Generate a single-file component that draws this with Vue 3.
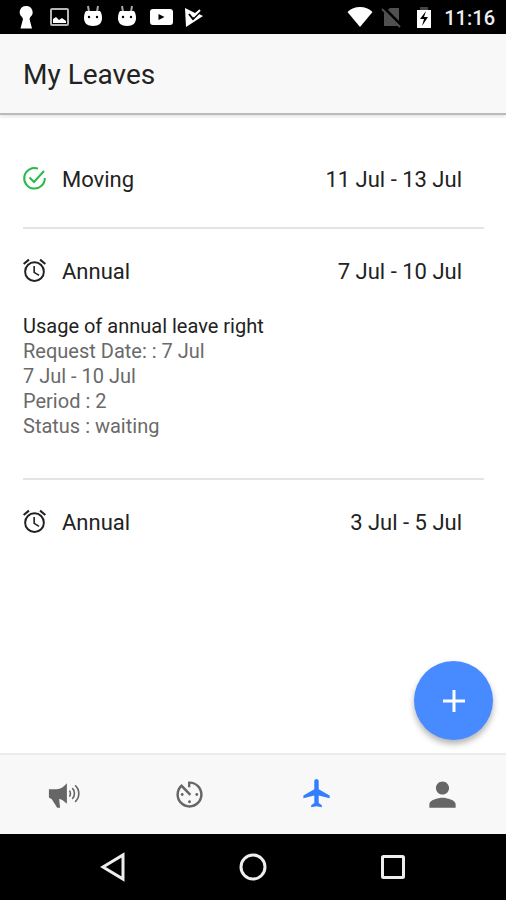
<template>
  <div class="screen">
    <div class="status-bar">
      <div class="status-group">
        <svg viewBox="0 0 24 24" fill="#fff">
          <path d="M12 1a6.2 6.2 0 0 0-4 11l1 2-2.500 9.500h11.500L15.500 14l.8-2A6.2 6.2 0 0 0 12 1z" />
        </svg>
        <svg viewBox="0 0 24 24">
          <rect x="3" y="4" width="17" height="16" rx="1" fill="none" stroke="#b5b5b5" stroke-width="2" />
          <path d="M5 18v-4l3-2 3 3 3-2 4 3v2z" fill="#fff" />
        </svg>
        <svg v-for="n in 2" :key="n" viewBox="0 0 24 24">
          <path d="M6 1l1 6M16 1l-1 6" stroke="#aaa" stroke-width="2" />
          <path d="M4 6h14c1.500 2 2 4 2 7 0 5-3 8-9 8s-9-3-9-8c0-3 .5-5 2-7z" fill="#fff" />
          <circle cx="7" cy="12" r="1.2" />
          <circle cx="15" cy="12" r="1.2" />
        </svg>
        <svg viewBox="0 0 24 24">
          <rect x="0" y="4" width="23" height="16" rx="3" fill="#fff" />
          <path d="M8.500 9l6 3-6 3z" />
        </svg>
        <svg viewBox="0 0 24 24">
          <path d="M1 3l10 5 5-3-1 4 4 2L2 22z" fill="#fff" />
          <path d="M5 9l4 5 9-9" fill="none" stroke="#000" stroke-width="2" />
          <path d="M7 8l3 3 6-6" fill="none" stroke="#fff" stroke-width="2" />
        </svg>
      </div>
      <div class="status-group right">
        <svg viewBox="0 0 24 24" fill="#fff">
          <path d="M12 22L-.5 7C3 3.500 7 2 12 2s9 1.500 12.500 5z" />
        </svg>
        <svg viewBox="0 0 24 24">
          <path d="M10 3h9v18H4V8z" fill="#505050" />
          <path d="M3 2l19 19" stroke="#000" stroke-width="3" />
          <path d="M2 4l18 18" stroke="#505050" stroke-width="2" />
        </svg>
        <svg viewBox="0 0 24 24">
          <path d="M8 2h8v3H8z" fill="#444" />
          <path d="M5 5h14v18H5z" fill="#fff" />
          <path d="M14 6l-6 8h4l-2 7 6-9h-4z" />
        </svg>
        <span class="clock">11:16</span>
      </div>
    </div>

    <header class="page-header">
      <h1>My Leaves</h1>
    </header>

    <main class="content">
      <ul class="leave-list">
        <li v-for="leave in leaves" :key="leave.id" class="leave-item">
          <div class="leave-head" @click="toggle(leave)">
            <svg v-if="leave.approved" class="leave-icon" viewBox="0 0 23 23" fill="none" stroke="#28ba4b" stroke-width="2">
              <path d="M15 1.600A10.300 10.300 0 1 0 21.800 11" />
              <path d="M6.500 10.500l4.500 4.500L21 4" />
            </svg>
            <svg v-else class="leave-icon" viewBox="2 2 20 20" fill="#222">
              <path
                d="M22 5.720l-4.600-3.860-1.150 1.370 4.600 3.860zM7.750 3.230L6.600 1.860 2 5.710l1.150 1.370zM12.400 8h-1.400v6l4.600 2.750.7-1.150-3.900-2.350zM12 4a9 9 0 1 0 0 18 9 9 0 0 0 0-18zm0 16.300a7.300 7.300 0 1 1 0-14.600 7.300 7.300 0 0 1 0 14.600z"
              />
            </svg>
            <span class="leave-type">{{ leave.type }}</span>
            <span class="leave-range">{{ leave.range }}</span>
          </div>
          <div v-if="leave.open && leave.detail" class="leave-detail">
            <h2>{{ leave.detail.title }}</h2>
            <p>Request Date: : {{ leave.detail.requested }}</p>
            <p>{{ leave.range }}</p>
            <p>Period : {{ leave.detail.period }}</p>
            <p>Status : {{ leave.detail.status }}</p>
          </div>
        </li>
      </ul>
      <button class="fab" type="button" aria-label="Add leave">
        <svg viewBox="0 0 22 22" stroke="#fff" stroke-width="3">
          <path d="M11 0v22M0 11h22" />
        </svg>
      </button>
    </main>

    <nav class="tabs">
      <button
        v-for="tab in tabs"
        :key="tab"
        type="button"
        :aria-label="tab"
        :class="{ active: tab === activeTab }"
        @click="activeTab = tab"
      >
        <svg v-if="tab === 'News'" viewBox="0 0 36 36">
          <path d="M3 12.500h8c4 0 7-2 10.500-6v21c-3-3-5-4.500-8-5l1 9h-3L6 23l-3-2z" fill="currentColor" />
          <path
            d="M24 14c1.500 1 1.500 5 0 6M27 11.500c3 2.500 3 8.500 0 11M30 8.500c5 4.500 5 12.500 0 17"
            fill="none"
            stroke="currentColor"
            stroke-width="1.700"
          />
        </svg>
        <svg v-else-if="tab === 'Time'" viewBox="0 0 24 24" fill="currentColor">
          <path
            d="M11 17c0 .55.45 1 1 1s1-.45 1-1-.45-1-1-1-1 .45-1 1zm0-14v4h1.600V4.700c3.800.3 6.700 3.500 6.700 7.300a7.300 7.300 0 0 1-14.600 0c0-1.800.7-3.500 1.800-4.800L12 12.800l1.200-1.200-6.600-6.800C4.420 6.450 3 9.050 3 12a9 9 0 1 0 9-9zm7 9c0-.55-.45-1-1-1s-1 .45-1 1 .45 1 1 1 1-.45 1-1zM6 12c0 .55.45 1 1 1s1-.45 1-1-.45-1-1-1-1 .45-1 1z"
          />
        </svg>
        <svg v-else-if="tab === 'Leaves'" viewBox="0 0 512 512" fill="currentColor">
          <path
            d="M448 312v-40L288 178V60c0-18-14-32-32-32s-32 14-32 32v118L64 272v40l160-42v112l-46 32v28l78-14 78 14v-28l-46-32V270z"
          />
        </svg>
        <svg v-else viewBox="0 0 512 512" fill="currentColor">
          <path
            d="M256 256c53 0 96-43 96-96s-43-96-96-96-96 43-96 96 43 96 96 96zm0 48c-64 0-192 32-192 96v48h384v-48c0-64-128-96-192-96z"
          />
        </svg>
      </button>
    </nav>

    <div class="system-nav">
      <button type="button" aria-label="Back">
        <svg viewBox="0 0 28 28"><path d="M24 2v24L4 14z" /></svg>
      </button>
      <button type="button" aria-label="Home">
        <svg viewBox="0 0 28 28"><circle cx="14" cy="14" r="12" /></svg>
      </button>
      <button type="button" aria-label="Recent apps">
        <svg viewBox="0 0 28 28"><rect x="3.500" y="3.500" width="21" height="21" rx="1" /></svg>
      </button>
    </div>
  </div>
</template>

<script setup>
import { ref } from 'vue'

const tabs = ['News', 'Time', 'Leaves', 'Profile']
const activeTab = ref('Leaves')

const leaves = ref([
  { id: 1, type: 'Moving', range: '11 Jul - 13 Jul', approved: true, open: false },
  {
    id: 2,
    type: 'Annual',
    range: '7 Jul - 10 Jul',
    approved: false,
    open: true,
    detail: {
      title: 'Usage of annual leave right',
      requested: '7 Jul',
      period: 2,
      status: 'waiting',
    },
  },
  { id: 3, type: 'Annual', range: '3 Jul - 5 Jul', approved: false, open: false },
])

function toggle(leave) {
  leave.open = !leave.open
}
</script>

<style>
body {
  margin: 0;
}
</style>

<style scoped>
.screen {
  display: flex;
  flex-direction: column;
  min-height: 100vh;
  background-color: #fff;
  color: #222;
  font-family: Roboto, 'Liberation Sans', sans-serif;
}

svg {
  display: block;
  overflow: visible;
}

button {
  padding: 0;
  border: none;
  background: none;
  cursor: pointer;
}

.status-bar {
  display: flex;
  justify-content: space-between;
  align-items: center;
  height: 34px;
  padding: 0 11px 0 14px;
  background-color: #000;
}

.status-group {
  display: flex;
  align-items: center;
  gap: 10px;
}

.status-group.right {
  gap: 8px;
}

.status-group svg {
  width: 24px;
  height: 24px;
}

.clock {
  color: #eee;
  font-size: 20px;
  font-weight: 500;
  line-height: 24px;
  padding-top: 2px;
}

.page-header {
  display: flex;
  align-items: center;
  height: 79px;
  padding: 0 23px;
  background-color: #f8f8f8;
  border-bottom: 2px solid #b9bbb9;
  box-shadow: 0 2px 3px rgba(0, 0, 0, 0.1);
}

.page-header h1 {
  margin: 0;
  padding-top: 2px;
  font-size: 28px;
  font-weight: 400;
  line-height: 36px;
}

.content {
  position: relative;
  flex: 1;
}

.leave-list {
  margin: 0;
  padding: 22px 22px 0 23px;
  list-style: none;
}

.leave-item {
  border-bottom: 2px solid #e4e4e4;
}

.leave-item:first-child {
  padding-bottom: 6px;
}

.leave-item:last-child {
  border-bottom: none;
}

.leave-head {
  display: flex;
  align-items: center;
  height: 84px;
  padding-right: 22px;
  cursor: pointer;
}

.leave-icon {
  width: 23px;
  height: 23px;
  margin: 0 16px 2px 0;
}

.leave-type,
.leave-range {
  padding-top: 2px;
  font-size: 22px;
  line-height: 28px;
}

.leave-range {
  margin-left: auto;
}

.leave-detail {
  padding: 1px 0 39px;
  color: #6a6a6a;
  font-size: 20px;
  line-height: 25px;
}

.leave-detail h2,
.leave-detail p {
  margin: 0;
  font-size: inherit;
  font-weight: 400;
}

.leave-detail h2 {
  color: #222;
}

.fab {
  position: absolute;
  right: 13px;
  bottom: 13px;
  display: flex;
  align-items: center;
  justify-content: center;
  width: 79px;
  height: 79px;
  border-radius: 50%;
  background-color: #488aff;
  box-shadow: 0 4px 6px rgba(0, 0, 0, 0.3);
}

.fab svg {
  width: 22px;
  height: 22px;
}

.tabs {
  display: flex;
  height: 79px;
  background-color: #f8f8f8;
  border-top: 2px solid #ececec;
}

.tabs button {
  display: flex;
  flex: 1;
  align-items: center;
  justify-content: center;
  color: #666;
}

.tabs button.active {
  color: #327eff;
}

.tabs svg {
  width: 35px;
  height: 35px;
}

.system-nav {
  display: flex;
  align-items: center;
  height: 66px;
  padding: 0 43px;
  background-color: #000;
}

.system-nav button {
  display: flex;
  flex: 1;
  justify-content: center;
}

.system-nav svg {
  width: 28px;
  height: 28px;
  fill: none;
  stroke: #eee;
  stroke-width: 3;
}
</style>
